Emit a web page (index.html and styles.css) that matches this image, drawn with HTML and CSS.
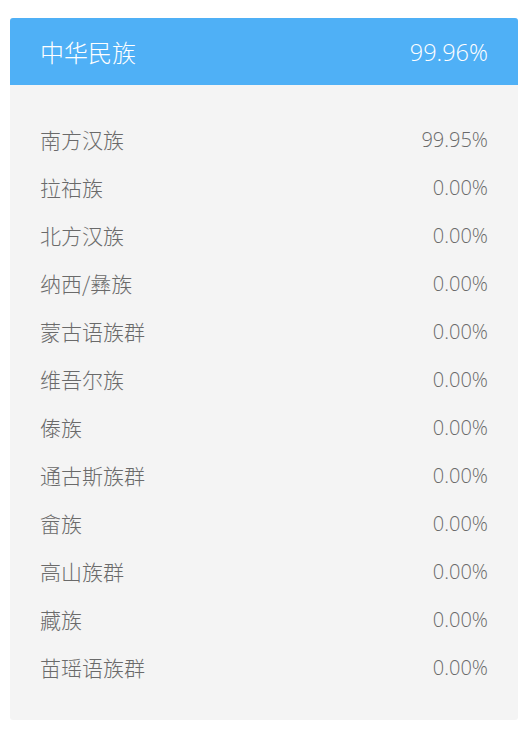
FILE: index.html
```html
<!DOCTYPE html>
<html lang="zh-CN">
<head>
<meta charset="utf-8">
<link rel="stylesheet" href="styles.css">
</head>
<body>
<div class="card">
  <div class="card-head">
    <span class="name">中华民族</span>
    <span class="pct">99.96%</span>
  </div>
  <ul class="list">
    <li><span class="name">南方汉族</span><span class="pct">99.95%</span></li>
    <li><span class="name">拉祜族</span><span class="pct">0.00%</span></li>
    <li><span class="name">北方汉族</span><span class="pct">0.00%</span></li>
    <li><span class="name">纳西/彝族</span><span class="pct">0.00%</span></li>
    <li><span class="name">蒙古语族群</span><span class="pct">0.00%</span></li>
    <li><span class="name">维吾尔族</span><span class="pct">0.00%</span></li>
    <li><span class="name">傣族</span><span class="pct">0.00%</span></li>
    <li><span class="name">通古斯族群</span><span class="pct">0.00%</span></li>
    <li><span class="name">畲族</span><span class="pct">0.00%</span></li>
    <li><span class="name">高山族群</span><span class="pct">0.00%</span></li>
    <li><span class="name">藏族</span><span class="pct">0.00%</span></li>
    <li><span class="name">苗瑶语族群</span><span class="pct">0.00%</span></li>
  </ul>
</div>
</body>
</html>
```

FILE: styles.css
```css
html, body {
  margin: 0;
  padding: 0;
  background: #ffffff;
}
body {
  padding: 18px 12px 0 10px;
  font-family: "Open Sans", "Noto Sans CJK SC", sans-serif;
  font-weight: 300;
}
.card {
  width: 508px;
  border-radius: 3px;
  overflow: hidden;
  background: #f4f4f4;
}
.card-head {
  height: 67px;
  background: #4fb0f6;
  color: #ffffff;
  display: flex;
  align-items: center;
  justify-content: space-between;
  padding: 0 30px;
  font-size: 23.5px;
}
.card-head .name {
  font-size: 24px;
}
.list {
  list-style: none;
  margin: 0;
  padding: 30px 30px 29px;
}
.list li {
  height: 48px;
  display: flex;
  align-items: center;
  justify-content: space-between;
  font-size: 20px;
  color: #6a6a6a;
}
.list .name {
  font-size: 21px;
}
.name {
  font-family: "Noto Sans CJK SC", sans-serif;
  font-weight: 300;
}
```
